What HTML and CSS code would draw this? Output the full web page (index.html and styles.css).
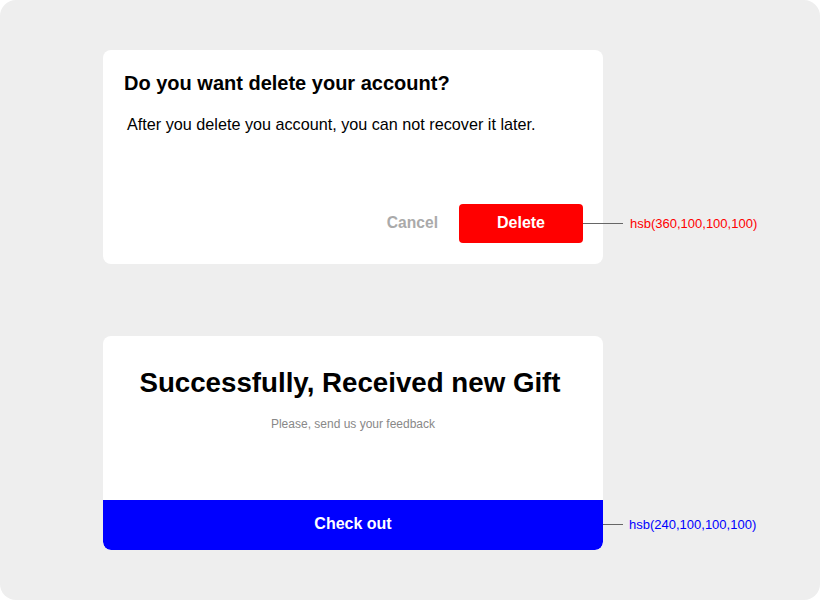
FILE: index.html
```html
<!DOCTYPE html>
<html>
<head>
<meta charset="utf-8">
<link rel="stylesheet" href="styles.css">
</head>
<body>
<div class="canvas">
  <div class="row row-first">
    <div class="card dialog">
      <h2 class="dialog-title">Do you want delete your account?</h2>
      <p class="dialog-text">After you delete you account, you can not recover it later.</p>
      <div class="actions">
        <button class="btn-cancel">Cancel</button>
        <button class="btn-delete">Delete</button>
      </div>
    </div>
    <div class="note note-red"><span class="line"></span><span class="label">hsb(360,100,100,100)</span></div>
  </div>
  <div class="row row-second">
    <div class="card gift">
      <h1 class="gift-title">Successfully, Received new Gift</h1>
      <p class="gift-text">Please, send us your feedback</p>
      <button class="btn-checkout">Check out</button>
    </div>
    <div class="note note-blue"><span class="line short"></span><span class="label">hsb(240,100,100,100)</span></div>
  </div>
</div>
</body>
</html>
```
FILE: styles.css
```css
* { box-sizing: border-box; }
html, body { margin: 0; padding: 0; background: #fff; }
body { font-family: "Liberation Sans", Arial, sans-serif; }
.canvas {
  width: 820px;
  height: 600px;
  background: #eeeeee;
  border-radius: 16px;
  padding: 50px 0 0 103px;
  display: flex;
  flex-direction: column;
}
.row { display: flex; align-items: flex-start; }
.row-second { margin-top: 72px; }
.card {
  width: 500px;
  background: #fff;
  border-radius: 8px;
}
.dialog {
  height: 214px;
  padding: 21px 20px 0 21px;
  display: flex;
  flex-direction: column;
}
.dialog-title {
  margin: 0;
  font-size: 20px;
  font-weight: bold;
  color: #000;
  line-height: 24px;
}
.dialog-text {
  margin: 19px 0 0 3px;
  font-size: 16.2px;
  line-height: 20px;
  color: #000;
}
.actions {
  margin-top: auto;
  margin-bottom: 21px;
  display: flex;
  justify-content: flex-end;
  align-items: center;
}
button {
  font-family: inherit;
  border: none;
  cursor: pointer;
}
.btn-cancel {
  background: none;
  color: #aaaaaa;
  font-size: 15.6px;
  font-weight: bold;
  padding: 0 0 1px 0;
  margin-right: 21px;
}
.btn-delete {
  width: 124px;
  height: 39px;
  padding: 0 0 1px 0;
  background: #ff0000;
  color: #fff;
  font-size: 16px;
  font-weight: bold;
  border-radius: 4px;
}
.note {
  display: flex;
  align-items: center;
  font-size: 13px;
}
.note-red { margin-top: 166px; margin-left: -20px; color: #ff0000; }
.note-blue { margin-top: 181px; color: #0000ff; }
.line {
  display: block;
  width: 40px;
  height: 1px;
  background: #666;
  margin-right: 7px;
}
.line.short { width: 20px; margin-right: 6px; }
.gift {
  height: 214px;
  display: flex;
  flex-direction: column;
  align-items: center;
  overflow: hidden;
}
.gift-title {
  margin: 30px 0 0 -6px;
  font-size: 27.7px;
  font-weight: bold;
  line-height: 34px;
  color: #000;
}
.gift-text {
  margin: 16px 0 0 0;
  font-size: 12px;
  line-height: 16px;
  color: #888;
}
.btn-checkout {
  margin-top: auto;
  width: 100%;
  height: 50px;
  padding: 0 0 2px 0;
  background: #0000ff;
  color: #fff;
  font-size: 16px;
  font-weight: bold;
  border-radius: 0 0 8px 8px;
}
```
